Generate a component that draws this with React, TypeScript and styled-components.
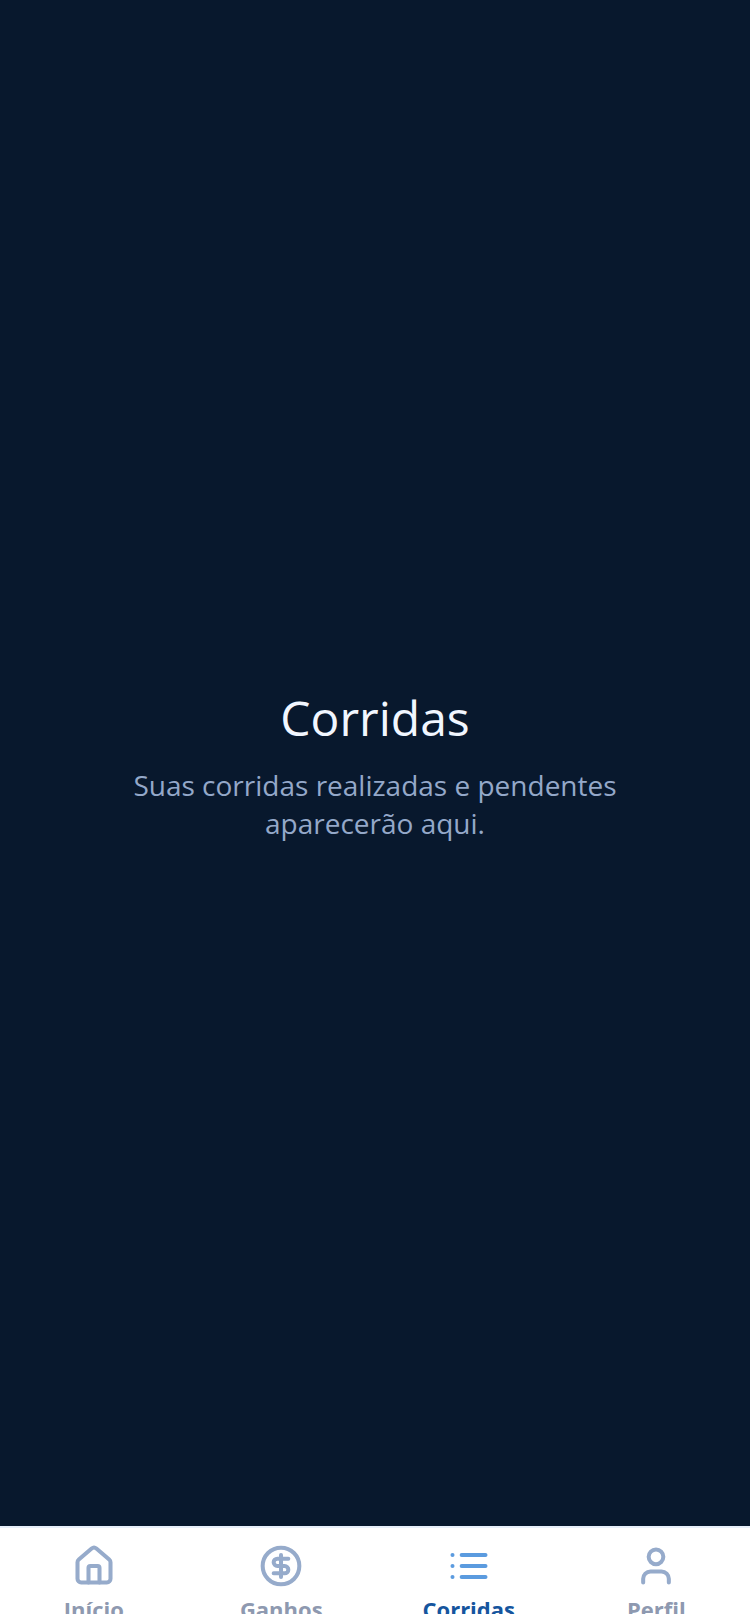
import React from "react";
import styled, { createGlobalStyle } from "styled-components";

const GlobalStyle = createGlobalStyle`
  * { box-sizing: border-box; }
  body {
    margin: 0;
    background: #08182d;
    font-family: "Open Sans", "Noto Sans", sans-serif;
  }
`;

const Screen = styled.div`
  display: flex;
  flex-direction: column;
  min-height: 100vh;
  background: #08182d;
`;

const Content = styled.main`
  flex: 1;
  display: flex;
  flex-direction: column;
  align-items: center;
  justify-content: center;
  gap: 16px;
  padding: 48px;
  text-align: center;
`;

const Title = styled.h1`
  margin: 0;
  color: #f1f6ff;
  font-size: 48px;
  font-weight: 400;
  line-height: 65px;
`;

const Subtitle = styled.p`
  max-width: 560px;
  margin: 0;
  color: #94a8c9;
  font-size: 28px;
  line-height: 38px;
`;

const TabBar = styled.nav`
  display: flex;
  padding: 16px 0 10px;
  border-top: 2px solid #e8effa;
  background: #ffffff;
`;

const Tab = styled.a<{ $active?: boolean }>`
  flex: 1;
  display: flex;
  flex-direction: column;
  align-items: center;
  gap: 6px;
  color: ${({ $active }) => ($active ? "#15559e" : "#8e99b0")};
  text-decoration: none;
`;

const TabIcon = styled.svg<{ $active?: boolean }>`
  width: 44px;
  height: 44px;
  fill: none;
  stroke: ${({ $active }) => ($active ? "#5b9bdf" : "#96abcb")};
  stroke-width: 2.2;
  stroke-linecap: round;
  stroke-linejoin: round;
`;

const TabLabel = styled.span`
  height: 20px;
  overflow: hidden;
  font-size: 22px;
  font-weight: 700;
  line-height: 30px;
`;

const tabs = [
  {
    id: "inicio",
    label: "Início",
    icon: (
      <>
        <path d="M15 21v-8a1 1 0 0 0-1-1h-4a1 1 0 0 0-1 1v8" />
        <path d="M3 10a2 2 0 0 1 .709-1.528l7-5.999a2 2 0 0 1 2.582 0l7 5.999A2 2 0 0 1 21 10v9a2 2 0 0 1-2 2H5a2 2 0 0 1-2-2z" />
      </>
    ),
  },
  {
    id: "ganhos",
    label: "Ganhos",
    icon: (
      <>
        <circle cx="12" cy="12" r="10" />
        <path d="M16 8h-6a2 2 0 1 0 0 4h4a2 2 0 1 1 0 4H8" />
        <path d="M12 18V6" />
      </>
    ),
  },
  {
    id: "corridas",
    label: "Corridas",
    icon: <path d="M3 6h.01M3 12h.01M3 18h.01M8 6h13M8 12h13M8 18h13" />,
  },
  {
    id: "perfil",
    label: "Perfil",
    icon: (
      <>
        <path d="M19 21v-2a4 4 0 0 0-4-4H9a4 4 0 0 0-4 4v2" />
        <circle cx="12" cy="7" r="4" />
      </>
    ),
  },
];

export default function App() {
  const current = "corridas";
  return (
    <>
      <GlobalStyle />
      <Screen>
        <Content>
          <Title>Corridas</Title>
          <Subtitle>Suas corridas realizadas e pendentes aparecerão aqui.</Subtitle>
        </Content>
        <TabBar>
          {tabs.map(({ id, label, icon }) => {
            const active = id === current;
            return (
              <Tab key={id} href={`#${id}`} $active={active} aria-current={active ? "page" : undefined}>
                <TabIcon viewBox="0 0 24 24" aria-hidden="true" $active={active}>
                  {icon}
                </TabIcon>
                <TabLabel>{label}</TabLabel>
              </Tab>
            );
          })}
        </TabBar>
      </Screen>
    </>
  );
}
